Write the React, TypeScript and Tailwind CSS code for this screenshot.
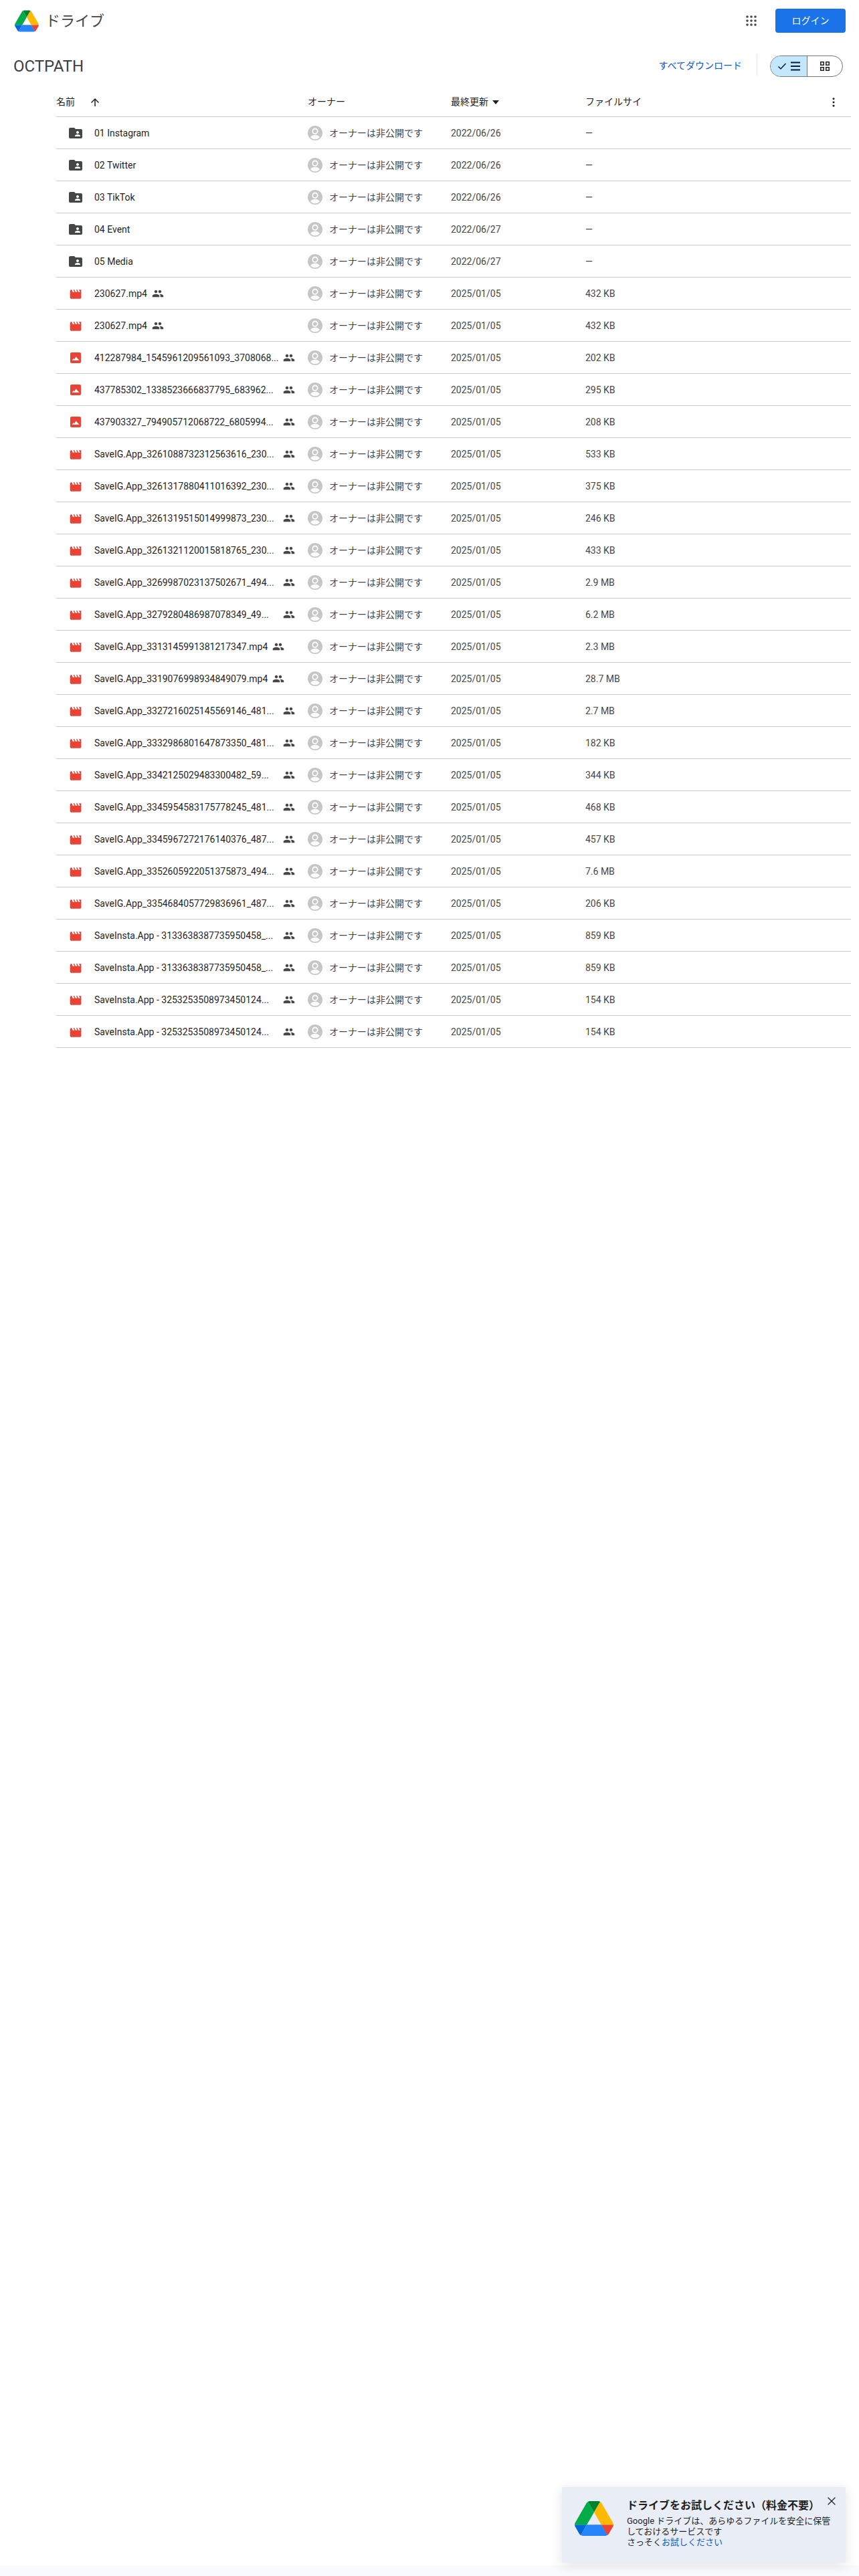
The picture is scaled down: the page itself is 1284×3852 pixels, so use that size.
import React from "react";
import { X } from "lucide-react";

const files = [
  { name: "01 Instagram", type: "folder", date: "2022/06/26", size: "—" },
  { name: "02 Twitter", type: "folder", date: "2022/06/26", size: "—" },
  { name: "03 TikTok", type: "folder", date: "2022/06/26", size: "—" },
  { name: "04 Event", type: "folder", date: "2022/06/27", size: "—" },
  { name: "05 Media", type: "folder", date: "2022/06/27", size: "—" },
  { name: "230627.mp4", type: "video", date: "2025/01/05", size: "432 KB" },
  { name: "230627.mp4", type: "video", date: "2025/01/05", size: "432 KB" },
  { name: "412287984_1545961209561093_3708068...", type: "image", date: "2025/01/05", size: "202 KB" },
  { name: "437785302_1338523666837795_683962...", type: "image", date: "2025/01/05", size: "295 KB" },
  { name: "437903327_794905712068722_6805994...", type: "image", date: "2025/01/05", size: "208 KB" },
  { name: "SaveIG.App_3261088732312563616_230...", type: "video", date: "2025/01/05", size: "533 KB" },
  { name: "SaveIG.App_3261317880411016392_230...", type: "video", date: "2025/01/05", size: "375 KB" },
  { name: "SaveIG.App_3261319515014999873_230...", type: "video", date: "2025/01/05", size: "246 KB" },
  { name: "SaveIG.App_3261321120015818765_230...", type: "video", date: "2025/01/05", size: "433 KB" },
  { name: "SaveIG.App_3269987023137502671_494...", type: "video", date: "2025/01/05", size: "2.9 MB" },
  { name: "SaveIG.App_3279280486987078349_49...", type: "video", date: "2025/01/05", size: "6.2 MB" },
  { name: "SaveIG.App_3313145991381217347.mp4", type: "video", date: "2025/01/05", size: "2.3 MB" },
  { name: "SaveIG.App_3319076998934849079.mp4", type: "video", date: "2025/01/05", size: "28.7 MB" },
  { name: "SaveIG.App_3327216025145569146_481...", type: "video", date: "2025/01/05", size: "2.7 MB" },
  { name: "SaveIG.App_3332986801647873350_481...", type: "video", date: "2025/01/05", size: "182 KB" },
  { name: "SaveIG.App_3342125029483300482_59...", type: "video", date: "2025/01/05", size: "344 KB" },
  { name: "SaveIG.App_3345954583175778245_481...", type: "video", date: "2025/01/05", size: "468 KB" },
  { name: "SaveIG.App_3345967272176140376_487...", type: "video", date: "2025/01/05", size: "457 KB" },
  { name: "SaveIG.App_3352605922051375873_494...", type: "video", date: "2025/01/05", size: "7.6 MB" },
  { name: "SaveIG.App_3354684057729836961_487...", type: "video", date: "2025/01/05", size: "206 KB" },
  { name: "SaveInsta.App - 3133638387735950458_...", type: "video", date: "2025/01/05", size: "859 KB" },
  { name: "SaveInsta.App - 3133638387735950458_...", type: "video", date: "2025/01/05", size: "859 KB" },
  { name: "SaveInsta.App - 3253253508973450124...", type: "video", date: "2025/01/05", size: "154 KB" },
  { name: "SaveInsta.App - 3253253508973450124...", type: "video", date: "2025/01/05", size: "154 KB" },
];

function DriveLogo({ className }: { className: string }) {
  return (
    <svg viewBox="0 0 87.3 78" className={className}>
      <path d="m6.6 66.85 3.85 6.65c.8 1.4 1.95 2.5 3.3 3.3l13.75-23.8h-27.5c0 1.55.4 3.1 1.2 4.5z" fill="#0066da" />
      <path d="m43.65 25-13.75-23.8c-1.35.8-2.5 1.9-3.3 3.3l-25.4 44a9.06 9.06 0 0 0 -1.2 4.5h27.5z" fill="#00ac47" />
      <path d="m73.55 76.8c1.35-.8 2.5-1.9 3.3-3.3l1.6-2.75 7.65-13.25c.8-1.4 1.2-2.95 1.2-4.5h-27.502l5.852 11.5z" fill="#ea4335" />
      <path d="m43.65 25 13.75-23.8c-1.35-.8-2.9-1.2-4.5-1.2h-18.5c-1.6 0-3.15.45-4.5 1.2z" fill="#00832d" />
      <path d="m59.8 53h-32.3l-13.75 23.8c1.35.8 2.9 1.2 4.5 1.2h50.8c1.6 0 3.15-.45 4.5-1.2z" fill="#2684fc" />
      <path d="m73.4 26.5-12.7-22c-.8-1.4-1.95-2.5-3.3-3.3l-13.75 23.8 16.15 28h27.45c0-1.55-.4-3.1-1.2-4.5z" fill="#ffba00" />
    </svg>
  );
}

function FileIcon({ type }: { type: string }) {
  if (type === "folder") {
    return (
      <svg viewBox="0 0 24 24" className="h-6 w-6 shrink-0" fill="#444746">
        <path d="M20 6h-8l-2-2H4c-1.1 0-2 .9-2 2v12c0 1.1.9 2 2 2h16c1.1 0 2-.9 2-2V8c0-1.1-.9-2-2-2zm-5 3c1.1 0 2 .9 2 2s-.9 2-2 2-2-.9-2-2 .9-2 2-2zm4 8h-8v-1c0-1.33 2.67-2 4-2s4 .67 4 2v1z" />
      </svg>
    );
  }
  if (type === "image") {
    return (
      <svg viewBox="0 0 16 16" className="mx-[4px] mt-[1px] h-4 w-4 shrink-0">
        <rect width="16" height="16" rx="2" fill="#ea4335" />
        <path d="M2.5 12 5 9l1.3 1.3L8.6 6.6 13.5 12z" fill="#fff" />
      </svg>
    );
  }
  return (
    <svg viewBox="0 0 24 24" className="mx-[2px] mt-[2px] h-5 w-5 shrink-0" fill="#ea4335">
      <path d="M18 4l2 4h-3l-2-4h-2l2 4h-3l-2-4H8l2 4H7L5 4H4c-1.1 0-1.99.9-1.99 2L2 18c0 1.1.9 2 2 2h16c1.1 0 2-.9 2-2V4h-4z" />
    </svg>
  );
}

function Avatar() {
  return (
    <svg viewBox="0 0 22 22" className="h-[22px] w-[22px] shrink-0">
      <circle cx="11" cy="11" r="11" fill="#c6c6c6" />
      <circle cx="11" cy="8.2" r="4.6" fill="#fff" />
      <circle cx="11" cy="8.2" r="2.8" fill="#c6c6c6" />
      <path d="M4.2 17.3c1-2.6 3.8-3.6 6.8-3.6s5.8 1 6.8 3.6c-1.6 1.9-4 3-6.8 3s-5.200-1.100-6.800-3z" fill="#fff" />
    </svg>
  );
}

function SharedIcon() {
  return (
    <svg viewBox="0 0 24 24" className="h-[18px] w-[18px] shrink-0" fill="#444746">
      <path d="M16 11c1.660 0 2.990-1.340 2.990-3S17.660 5 16 5c-1.660 0-3 1.340-3 3s1.340 3 3 3zm-8 0c1.660 0 2.990-1.340 2.990-3S9.660 5 8 5C6.340 5 5 6.340 5 8s1.340 3 3 3zm0 2c-2.330 0-7 1.170-7 3.500V19h14v-2.500c0-2.330-4.670-3.500-7-3.500zm8 0c-.29 0-.62.02-.97.05 1.160.84 1.970 1.970 1.970 3.450V19h6v-2.500c0-2.330-4.670-3.500-7-3.500z" />
    </svg>
  );
}

function Waffle() {
  return (
    <svg viewBox="0 0 16 16" className="h-4 w-4" fill="#444746">
      {[2, 8, 14].map((y) => [2, 8, 14].map((x) => <circle key={`${x}-${y}`} cx={x} cy={y} r="1.800" />))}
    </svg>
  );
}

function Row({ file }: { file: (typeof files)[number] }) {
  const cut = file.name.endsWith("...");
  return (
    <div className="flex h-12 items-center border-b border-[#c7c7c7] text-sm">
      <div className="flex w-[376px] shrink-0 items-center pl-[17px]">
        <FileIcon type={file.type} />
        {/* long names run up to the shared icon, short ones sit next to it */}
        <span className={cut ? "ml-4 w-[282px] whitespace-nowrap text-[#1f1f1f]" : "ml-4 whitespace-nowrap text-[#1f1f1f]"}>
          {file.name}
        </span>
        {file.type !== "folder" && (
          <span className={cut ? "" : "ml-[7px]"}>
            <SharedIcon />
          </span>
        )}
      </div>
      <div className="flex w-[214px] shrink-0 items-center gap-[10px] text-[#444746]">
        <Avatar />
        <span>オーナーは非公開です</span>
      </div>
      <div className="w-[201px] shrink-0 text-[#444746]">{file.date}</div>
      <div className="text-[#444746]">{file.size}</div>
    </div>
  );
}

export default function App() {
  return (
    <div className="relative flex min-h-[3852px] flex-col bg-white font-['Roboto','Noto_Sans_CJK_JP',sans-serif]">
      <header className="flex h-[62px] items-center pl-[22px] pr-5">
        <DriveLogo className="h-[33px] w-9" />
        <span className="ml-[10px] text-[22px] text-[#444746]">ドライブ</span>
        <div className="ml-auto mr-6 flex h-6 w-6 items-center justify-center">
          <Waffle />
        </div>
        <button className="h-9 w-[105px] rounded bg-[#1a73e8] text-sm text-white">ログイン</button>
      </header>

      <div className="flex h-[69px] items-start pl-[20px] pr-6 pt-[19px]">
        <h1 className="text-2xl leading-[36px] text-[#3c4043]">OCTPATH</h1>
        <a className="ml-auto mt-[7px] text-sm text-[#0b57d0]">すべてダウンロード</a>
        <div className="ml-[22px] h-8 border-l border-[#e3e3e3]" />
        <div className="ml-[19px] mt-[2px] flex h-8 w-[109px] overflow-hidden rounded-full border border-[#747775]">
          <div className="flex w-[55px] items-center justify-center gap-[6px] border-r border-[#747775] bg-[#c2e7ff]">
            <svg viewBox="0 0 14 14" className="h-[14px] w-[14px]" fill="none" stroke="#001d35" strokeWidth="1.500">
              <path d="M1.500 7.500 5 11l7.500-8" />
            </svg>
            <svg viewBox="0 0 14 14" className="h-[14px] w-[14px]" fill="#001d35">
              <rect width="14" height="2" y="0.500" />
              <rect width="14" height="2" y="6" />
              <rect width="14" height="2" y="11.500" />
            </svg>
          </div>
          <div className="flex flex-1 items-center justify-center">
            <svg viewBox="0 0 14 14" className="h-[14px] w-[14px]" fill="none" stroke="#1f1f1f" strokeWidth="1.500">
              <rect x="0.750" y="0.750" width="4.500" height="4.500" />
              <rect x="8.750" y="0.750" width="4.500" height="4.500" />
              <rect x="0.750" y="8.750" width="4.500" height="4.500" />
              <rect x="8.750" y="8.750" width="4.500" height="4.500" />
            </svg>
          </div>
        </div>
      </div>

      <main className="ml-[84px] mr-3 flex-1">
        <div className="flex h-[44px] items-center border-b border-[#c7c7c7] text-[14px] text-[#1f1f1f]">
          <div className="flex w-[376px] shrink-0 items-center">
            <span>名前</span>
            <svg viewBox="0 0 24 24" className="ml-[21px] h-[18px] w-[18px]" fill="#1f1f1f">
              <path d="M4 12l1.410 1.410L11 7.830V20h2V7.830l5.580 5.590L20 12l-8-8-8 8z" />
            </svg>
          </div>
          <div className="w-[214px] shrink-0">オーナー</div>
          <div className="flex w-[201px] shrink-0 items-center">
            <span>最終更新</span>
            <svg viewBox="0 0 10 6" className="ml-[6px] h-[6px] w-[10px]" fill="#1f1f1f">
              <path d="M0 0h10L5 6z" />
            </svg>
          </div>
          <div className="flex flex-1 items-center justify-between pr-[24px]">
            <span>ファイルサイ</span>
            <svg viewBox="0 0 4 16" className="h-[14px] w-1" fill="#1f1f1f">
              <circle cx="2" cy="2" r="1.700" />
              <circle cx="2" cy="8" r="1.700" />
              <circle cx="2" cy="14" r="1.700" />
            </svg>
          </div>
        </div>
        {files.map((file, i) => (
          <Row key={i} file={file} />
        ))}
      </main>

      <div className="h-4 bg-[#f8fafd]" />

      {/* promo toast floating over the page */}
      <div className="absolute bottom-5 right-5 flex h-[113px] w-[424px] bg-[#e9eef6] shadow-[0_4px_16px_rgba(60,64,67,0.15)]">
        <DriveLogo className="ml-[19px] mt-[21px] h-[52px] w-[58px] shrink-0" />
        <div className="ml-[20px] pt-[16px]">
          <div className="whitespace-nowrap text-base font-bold leading-6 text-[#1f1f1f]">ドライブをお試しください（料金不要）</div>
          <p className="mt-[3px] w-[310px] text-[13px] leading-4 text-[#1f1f1f]">
            Google ドライブは、あらゆるファイルを安全に保管しておけるサービスです
            <br />
            さっそく<span className="text-[#0b57d0]">お試しください</span>
          </p>
        </div>
        <X className="absolute right-[11px] top-[11px] h-5 w-5 text-[#1f1f1f]" strokeWidth={1.5} />
      </div>
    </div>
  );
}
